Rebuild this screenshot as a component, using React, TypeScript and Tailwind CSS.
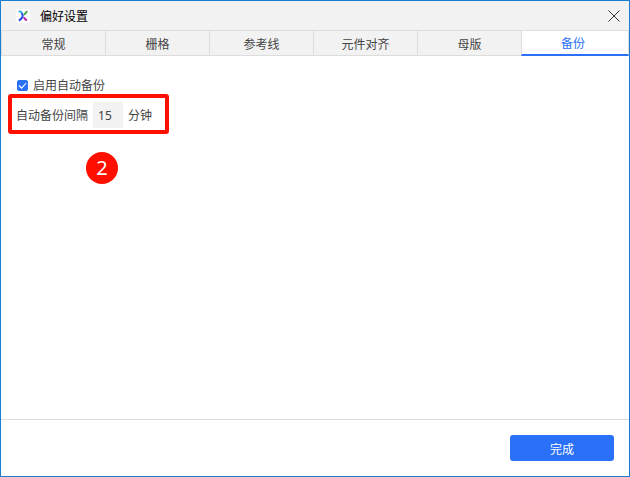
import { useState } from 'react';
import clsx from 'clsx';

const tabs = ['常规', '栅格', '参考线', '元件对齐', '母版', '备份'];

function AppLogo() {
  return (
    <svg viewBox="0 0 14 14" className="w-3.5 h-3.5 rounded-[3px] bg-white" aria-hidden="true">
      <path d="M2.6 2.5h2.2l2 3" fill="none" stroke="#12a5dc" strokeWidth="1.6" />
      <path d="M11.2 2.2 8.2 5.8" fill="none" stroke="#3fae3c" strokeWidth="1.8" />
      <path d="M5.6 4.2C8 7 6.6 9 2.8 11.6" fill="none" stroke="#2b4fe0" strokeWidth="2" />
      <path d="M8 8.2c.4 1.4 1.4 2.4 3 3.2" fill="none" stroke="#c01fae" strokeWidth="2" />
    </svg>
  );
}

function TitleBar() {
  return (
    <header className="flex items-center h-[29px] pl-[15px] pr-[9px] bg-[#f2f2f2]">
      <AppLogo />
      <h1 className="ml-2.5 text-black">偏好设置</h1>
      <button type="button" aria-label="关闭" className="ml-auto text-[#333333]">
        <svg viewBox="0 0 12 12" className="w-3 h-3" fill="none" stroke="currentColor" strokeWidth="1">
          <path d="M0.5 0.5 11.5 11.5M11.5 0.5 0.5 11.5" />
        </svg>
      </button>
    </header>
  );
}

export default function App() {
  const [active, setActive] = useState('备份');
  const [enabled, setEnabled] = useState(true);
  const [interval, setInterval] = useState('15');

  return (
    <div className="flex flex-col min-h-screen border border-[#1a7fd0] bg-white font-['Noto_Sans_CJK_SC',sans-serif] text-xs text-[#444444]">
      <TitleBar />

      <nav role="tablist" className="grid grid-cols-[repeat(5,104fr)_108fr] h-[26px] border-t border-[#dddddd]">
        {tabs.map((tab) => (
          <button
            key={tab}
            type="button"
            role="tab"
            aria-selected={tab === active}
            onClick={() => setActive(tab)}
            className={clsx(
              'border-l border-l-[#dddddd] pt-px last:border-r last:border-r-[#dddddd] last:pr-1',
              tab === active
                ? 'border-b-2 border-b-[#2a70f8] bg-white text-[#2a70f8]'
                : 'border-b border-b-[#dddddd] bg-[#f2f2f2]'
            )}
          >
            {tab}
          </button>
        ))}
      </nav>

      <main className="flex flex-col items-start flex-1 pt-5 px-[7px]">
        <label className="flex items-center gap-[5px] h-[18px] pl-[9px]">
          <span className="grid place-items-center">
            <input
              type="checkbox"
              checked={enabled}
              onChange={(e) => setEnabled(e.target.checked)}
              className="peer appearance-none col-start-1 row-start-1 w-[11px] h-[11px] rounded-[2px] border border-[#2a70f8] checked:bg-[#2a70f8]"
            />
            <svg
              viewBox="0 0 11 11"
              className="col-start-1 row-start-1 w-[11px] h-[11px] pointer-events-none invisible peer-checked:visible"
              fill="none"
              stroke="white"
              strokeWidth="1.1"
            >
              <path d="M2 5.5 4.6 8.1 9.2 3" />
            </svg>
          </span>
          启用自动备份
        </label>

        <div className="relative flex items-center h-10 pt-px pl-1 pr-[13px] border-4 border-[#ff0f00] rounded-[3px]">
          <label htmlFor="backup-interval">自动备份间隔</label>
          <input
            id="backup-interval"
            type="text"
            value={interval}
            onChange={(e) => setInterval(e.target.value)}
            className="w-[30px] h-[26px] mx-[5px] pt-px pl-[5px] bg-[#f2f2f2] font-['Noto_Sans',sans-serif] outline-none"
          />
          <span>分钟</span>
          <span className="absolute left-[74px] top-[54px] flex items-center justify-center w-8 h-8 rounded-full bg-[#ff0f00] font-['Noto_Sans',sans-serif] text-xl leading-8 text-white">
            2
          </span>
        </div>
      </main>

      <footer className="flex justify-end px-[15px] py-[15px] border-t border-[#dddddd]">
        <button type="button" className="w-[104px] h-[26px] pt-px rounded-[3px] bg-[#2a70f8] text-white">
          完成
        </button>
      </footer>
    </div>
  );
}
